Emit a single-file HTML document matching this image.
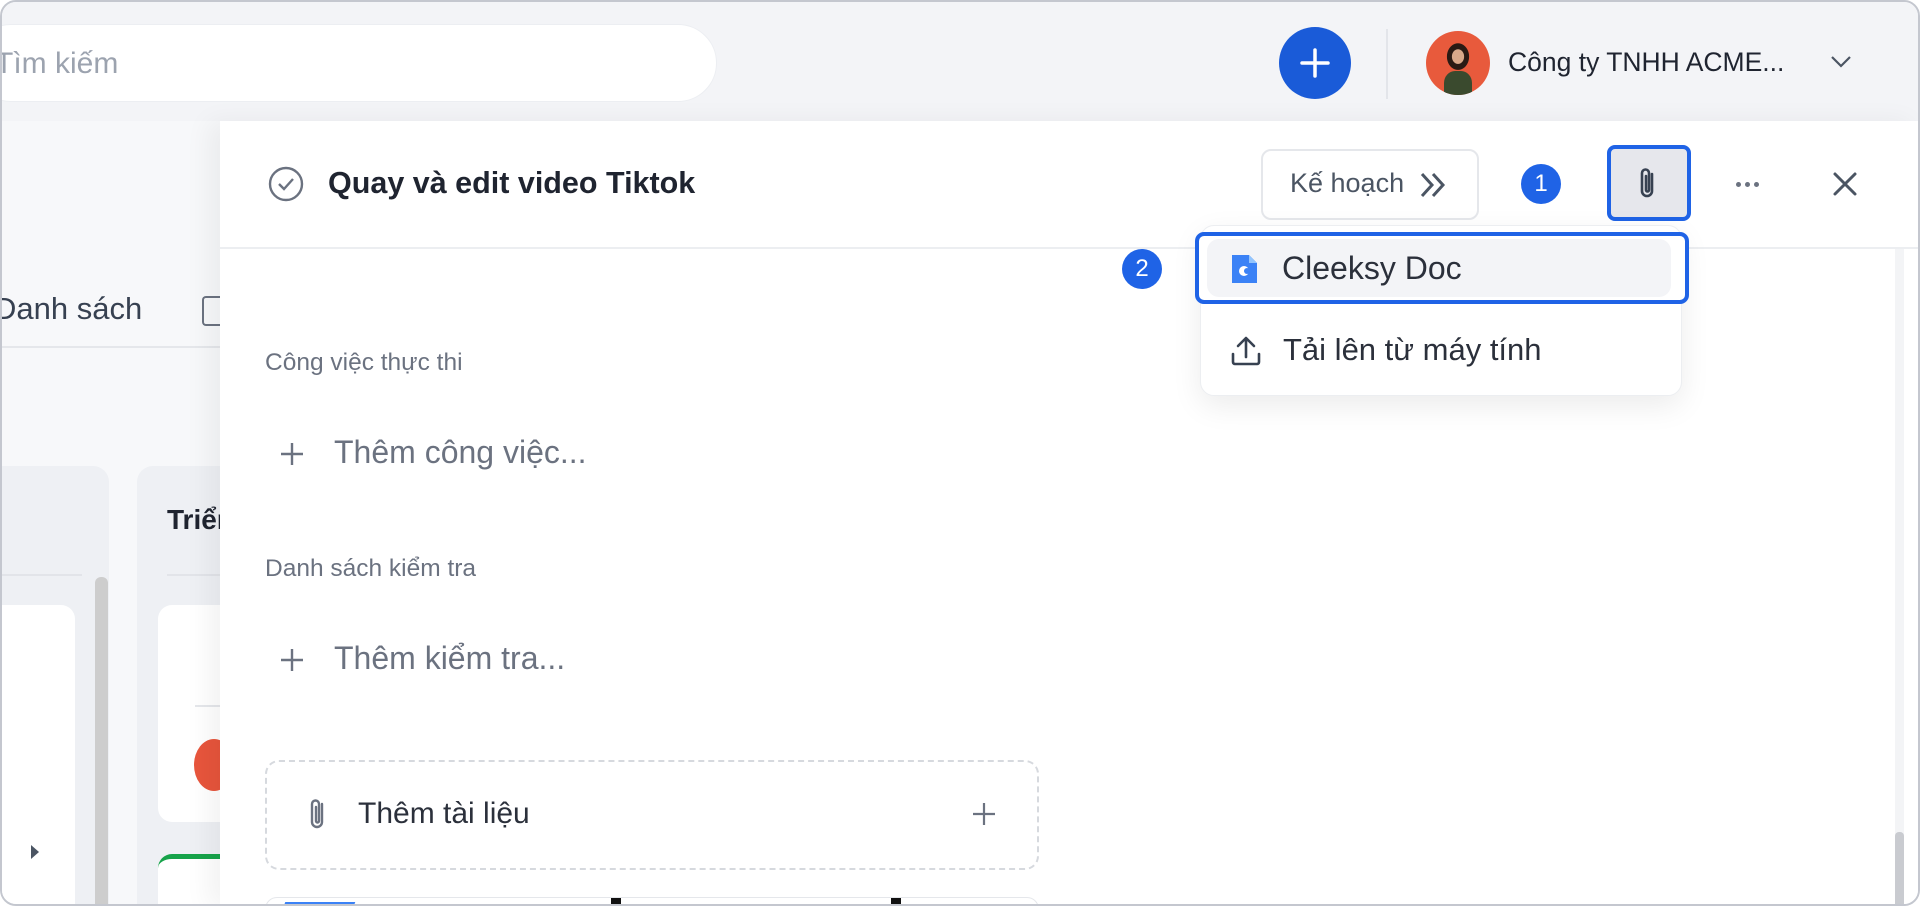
<!DOCTYPE html>
<html><head><meta charset="utf-8"><style>
*{box-sizing:border-box;margin:0;padding:0}
body{width:1920px;height:906px;overflow:hidden;background:#fff;font-family:"Liberation Sans",Arial,sans-serif;position:relative}
.frame{position:absolute;left:0;top:0;width:1920px;height:906px;border:2px solid #c4c7cf;border-radius:16px;overflow:hidden;background:#f7f8fa}
.abs{position:absolute}
.top{left:0;top:0;width:1920px;height:119px;background:#f3f4f7}
.search{left:-30px;top:22px;width:745px;height:78px;background:#fff;border-radius:40px;border:1px solid #eceef2}
.search span{position:absolute;left:22px;top:22px;font-size:30px;color:#9ca3af}
.plus{left:1277px;top:25px;width:72px;height:72px;border-radius:50%;background:#1a5bd8}
.avatar{left:1424px;top:29px;width:64px;height:64px;border-radius:50%;background:radial-gradient(ellipse at 50% 40%,#d8a88a 0 13%,#2a1a14 14% 24%,#e85a3c 25%);overflow:hidden}
.panel{left:218px;top:119px;width:1702px;height:787px;background:#fff;box-shadow:-12px 0 24px rgba(0,0,0,.05)}
.t{position:absolute;white-space:nowrap}
.gray{color:#6b7280}
.col{background:#eef0f4;border-radius:16px}
.card{background:#fff;border-radius:14px}
.badge{width:40px;height:40px;border-radius:50%;background:#1f63e6;color:#fff;font-size:24px;text-align:center;line-height:40px}
.dot{position:absolute;width:5px;height:5px;border-radius:50%;background:#6b7280}
</style></head><body>
<div class="frame">
<div class="abs top"></div>
<div class="abs search"><span>Tìm kiếm</span></div>
<div class="abs plus"><svg width="72" height="72"><path d="M36 23v26M23 36h26" stroke="#fff" stroke-width="3.5" stroke-linecap="round"/></svg></div>
<div class="abs" style="left:1384px;top:27px;width:2px;height:70px;background:#e3e5ea"></div>
<div class="abs avatar"><div style="position:absolute;left:18px;top:40px;width:28px;height:30px;background:#3a4a2e;border-radius:40% 40% 0 0"></div></div>
<div class="t" style="left:1506px;top:45px;font-size:26.5px;color:#1f2430">Công ty TNHH ACME...</div>
<svg class="abs" style="left:1827px;top:52px" width="24" height="16"><path d="M3 3l9 9 9-9" stroke="#4b5563" stroke-width="2.2" fill="none"/></svg>

<!-- background board -->
<div class="t" style="left:-8px;top:289px;font-size:31px;color:#374151">Danh sách</div>
<div class="abs" style="left:200px;top:294px;width:18px;height:30px;border:2px solid #6b7280;border-right:none;border-radius:4px 0 0 4px"></div>
<div class="abs" style="left:0;top:344px;width:218px;height:2px;background:#e5e7eb"></div>
<div class="abs col" style="left:-20px;top:464px;width:127px;height:460px"></div>
<div class="abs" style="left:0;top:572px;width:80px;height:2px;background:#e2e4e9"></div>
<div class="abs card" style="left:-20px;top:603px;width:93px;height:320px"></div>
<div class="abs" style="left:93px;top:575px;width:13px;height:340px;background:#cdcdcd;border-radius:6px"></div>
<svg class="abs" style="left:27px;top:842px" width="12" height="16"><path d="M2 1l8 7-8 7z" fill="#4b5563"/></svg>
<div class="abs col" style="left:135px;top:464px;width:120px;height:460px"></div>
<div class="t" style="left:165px;top:502px;font-size:28px;font-weight:bold;color:#1f2430">Triển</div>
<div class="abs" style="left:165px;top:572px;width:80px;height:2px;background:#e2e4e9"></div>
<div class="abs card" style="left:156px;top:603px;width:100px;height:217px"></div>
<div class="abs" style="left:193px;top:703px;width:40px;height:2px;background:#e5e7eb"></div>
<div class="abs" style="left:192px;top:737px;width:40px;height:52px;border-radius:50%;background:#e8553c"></div>
<div class="abs card" style="left:156px;top:852px;width:100px;height:80px;border-top:5px solid #16a34a"></div>

<!-- panel -->
<div class="abs panel"></div>
<div class="abs" style="left:218px;top:245px;width:1702px;height:2px;background:#eceef1"></div>
<div class="abs" style="left:1893px;top:247px;width:9px;height:660px;background:#f3f4f6"></div>
<div class="abs" style="left:1893px;top:830px;width:9px;height:76px;background:#c9cbd0;border-radius:4px"></div>
<svg class="abs" style="left:265px;top:163px" width="38" height="38"><circle cx="19" cy="19" r="16" stroke="#6b7280" stroke-width="2.4" fill="none"/><path d="M12 19l5 5 9-10" stroke="#6b7280" stroke-width="2.4" fill="none"/></svg>
<div class="t" style="left:326px;top:164px;font-size:30.5px;font-weight:bold;color:#1f2430">Quay và edit video Tiktok</div>

<div class="abs" style="left:1259px;top:147px;width:218px;height:71px;border:2px solid #e5e7eb;border-radius:10px"></div>
<div class="t" style="left:1288px;top:166px;font-size:27px;color:#4b5563">Kế hoạch</div>
<svg class="abs" style="left:1416px;top:168px" width="32" height="30"><path d="M4 4l10 11-10 11M15 4l10 11-10 11" stroke="#4b5563" stroke-width="3" fill="none"/></svg>
<div class="abs badge" style="left:1519px;top:162px">1</div>
<div class="abs" style="left:1605px;top:143px;width:84px;height:76px;border:4px solid #1f63e6;border-radius:8px;background:#e6e7ec"></div>
<svg class="abs" style="left:1633px;top:163px" width="28" height="38"><path d="M17 9v17a5 5 0 0 1-10 0V8a3.5 3.5 0 0 1 7 0v17a1.5 1.5 0 0 1-3 0V11" stroke="#374151" stroke-width="2.6" fill="none" stroke-linecap="round"/></svg>
<div class="dot" style="left:1734px;top:180px"></div><div class="dot" style="left:1743px;top:180px"></div><div class="dot" style="left:1752px;top:180px"></div>
<svg class="abs" style="left:1829px;top:168px" width="28" height="28"><path d="M4 4l20 20M24 4L4 24" stroke="#4b5563" stroke-width="3" stroke-linecap="round"/></svg>

<!-- dropdown -->
<div class="abs" style="left:1198px;top:223px;width:482px;height:171px;background:#fff;border-radius:14px;border:1px solid #eceef1;box-shadow:0 10px 30px rgba(0,0,0,.08)"></div>
<div class="abs" style="left:1193px;top:230px;width:494px;height:72px;border:4px solid #1f63e6;border-radius:9px;background:#fff"><div style="position:absolute;left:8px;top:3px;right:14px;bottom:3px;background:#f3f4f7;border-radius:12px"></div></div>
<svg class="abs" style="left:1228px;top:251px" width="30" height="32"><path d="M2 2h17l8 8v20H2z" fill="#3b82f6"/><path d="M19 2v8h8" fill="#93c5fd"/><circle cx="14" cy="18" r="5" fill="#fff"/><circle cx="17" cy="18" r="3" fill="#3b82f6"/></svg>
<div class="t" style="left:1280px;top:248px;font-size:32px;color:#2b303b">Cleeksy Doc</div>
<div class="abs badge" style="left:1120px;top:247px">2</div>
<svg class="abs" style="left:1228px;top:333px" width="32" height="32"><path d="M3 19v8a2 2 0 0 0 2 2h22a2 2 0 0 0 2-2v-8M16 22V3M8 11l8-8 8 8" stroke="#374151" stroke-width="2.6" fill="none" stroke-linecap="round" stroke-linejoin="round"/></svg>
<div class="t" style="left:1281px;top:330px;font-size:31px;color:#2b303b">Tải lên từ máy tính</div>

<div class="t gray" style="left:263px;top:347px;font-size:24.5px">Công việc thực thi</div>
<svg class="abs" style="left:277px;top:439px" width="26" height="26"><path d="M13 2v22M2 13h22" stroke="#6b7280" stroke-width="2.4"/></svg>
<div class="t gray" style="left:332px;top:432px;font-size:32px">Thêm công việc...</div>
<div class="t gray" style="left:263px;top:553px;font-size:24.5px">Danh sách kiểm tra</div>
<svg class="abs" style="left:277px;top:645px" width="26" height="26"><path d="M13 2v22M2 13h22" stroke="#6b7280" stroke-width="2.4"/></svg>
<div class="t gray" style="left:332px;top:638px;font-size:32px">Thêm kiểm tra...</div>

<div class="abs" style="left:263px;top:758px;width:774px;height:110px;border:2px dashed #d6d9de;border-radius:14px"></div>
<svg class="abs" style="left:305px;top:795px" width="24" height="36"><path d="M15 7v18a5 5 0 0 1-10 0V7a3.5 3.5 0 0 1 7 0v17a1.5 1.5 0 0 1-3 0V10" stroke="#6b7280" stroke-width="2.4" fill="none" stroke-linecap="round"/></svg>
<div class="t" style="left:356px;top:795px;font-size:30px;color:#2b303b">Thêm tài liệu</div>
<svg class="abs" style="left:969px;top:799px" width="26" height="26"><path d="M13 2v22M2 13h22" stroke="#6b7280" stroke-width="2.2"/></svg>

<div class="abs" style="left:263px;top:895px;width:774px;height:40px;border:1px solid #e5e7eb;border-radius:12px;overflow:hidden"><div style="position:absolute;left:12px;top:4px;width:70px;height:40px;background:#3b82f6;transform:skewX(-20deg)"></div><div style="position:absolute;left:345px;top:0;width:10px;height:20px;background:#111"></div><div style="position:absolute;left:625px;top:0;width:10px;height:20px;background:#111"></div></div>
</div>
</body></html>
